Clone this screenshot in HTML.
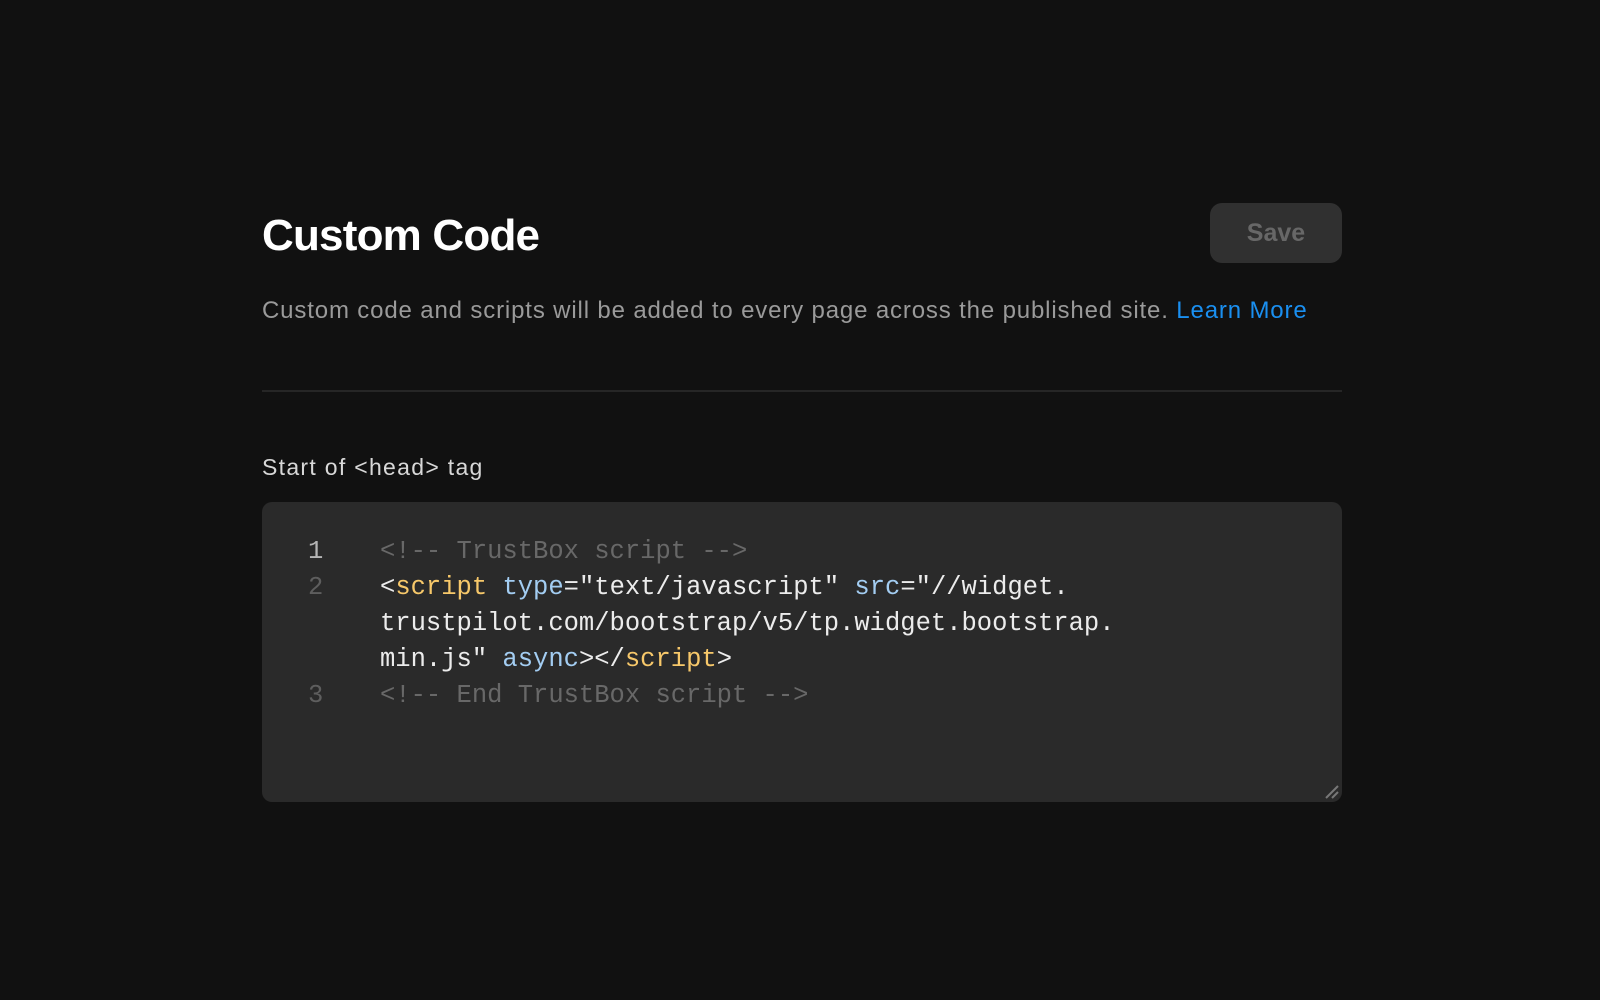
<!DOCTYPE html>
<html><head><meta charset="utf-8"><style>
html,body{margin:0;padding:0;background:#111111;width:1600px;height:1000px;overflow:hidden;font-family:"Liberation Sans",sans-serif}
.title{position:absolute;left:262px;top:211px;font-size:44px;font-weight:bold;color:#fff;letter-spacing:-0.8px}
.save{position:absolute;left:1210px;top:203px;width:132px;height:60px;background:#303030;border-radius:12px;color:#676767;font-weight:bold;font-size:25px;text-align:center;line-height:60px}
.desc{position:absolute;left:262px;top:297px;font-size:24px;letter-spacing:0.85px;color:#9a9a9a;white-space:nowrap}
.desc span{color:#1a8ff0}
.hr{position:absolute;left:262px;top:390px;width:1080px;height:2px;background:#262626}
.label{position:absolute;left:262px;top:454px;font-size:23px;letter-spacing:1.3px;color:#d8d8d8;white-space:nowrap}
.box{position:absolute;left:262px;top:502px;width:1080px;height:300px;background:#2a2a2a;border-radius:10px}
.code{position:absolute;left:0;top:32px;width:100%;font-family:"Liberation Mono",monospace;font-size:25.5px;line-height:36px;color:#ececec}
.row{position:relative;height:36px;white-space:pre}
.ln{position:absolute;left:46px;width:20px;color:#5e5e5e}
.tx{position:absolute;left:118px}
.c{color:#686868}.t{color:#f7c86a}.a{color:#a3cdf2}
.grip{position:absolute;right:2px;bottom:2px}
</style></head><body>
<div class="title">Custom Code</div>
<div class="save">Save</div>
<div class="desc">Custom code and scripts will be added to every page across the published site. <span>Learn More</span></div>
<div class="hr"></div>
<div class="label">Start of &lt;head&gt; tag</div>
<div class="box">
<div class="code"><div class="row"><span class="ln" style="color:#b5b5b5">1</span><span class="tx c">&lt;!-- TrustBox script --&gt;</span></div><div class="row"><span class="ln">2</span><span class="tx">&lt;<span class="t">script</span> <span class="a">type</span>="text/javascript" <span class="a">src</span>="//widget.</span></div><div class="row"><span class="tx">trustpilot.com/bootstrap/v5/tp.widget.bootstrap.</span></div><div class="row"><span class="tx">min.js" <span class="a">async</span>&gt;&lt;/<span class="t">script</span>&gt;</span></div><div class="row"><span class="ln">3</span><span class="tx c">&lt;!-- End TrustBox script --&gt;</span></div></div>
<svg class="grip" width="18" height="18" viewBox="0 0 18 18"><path d="M4 16L16 4M10 16L16 10" stroke="#777" stroke-width="2"/></svg>
</div>
</body></html>
